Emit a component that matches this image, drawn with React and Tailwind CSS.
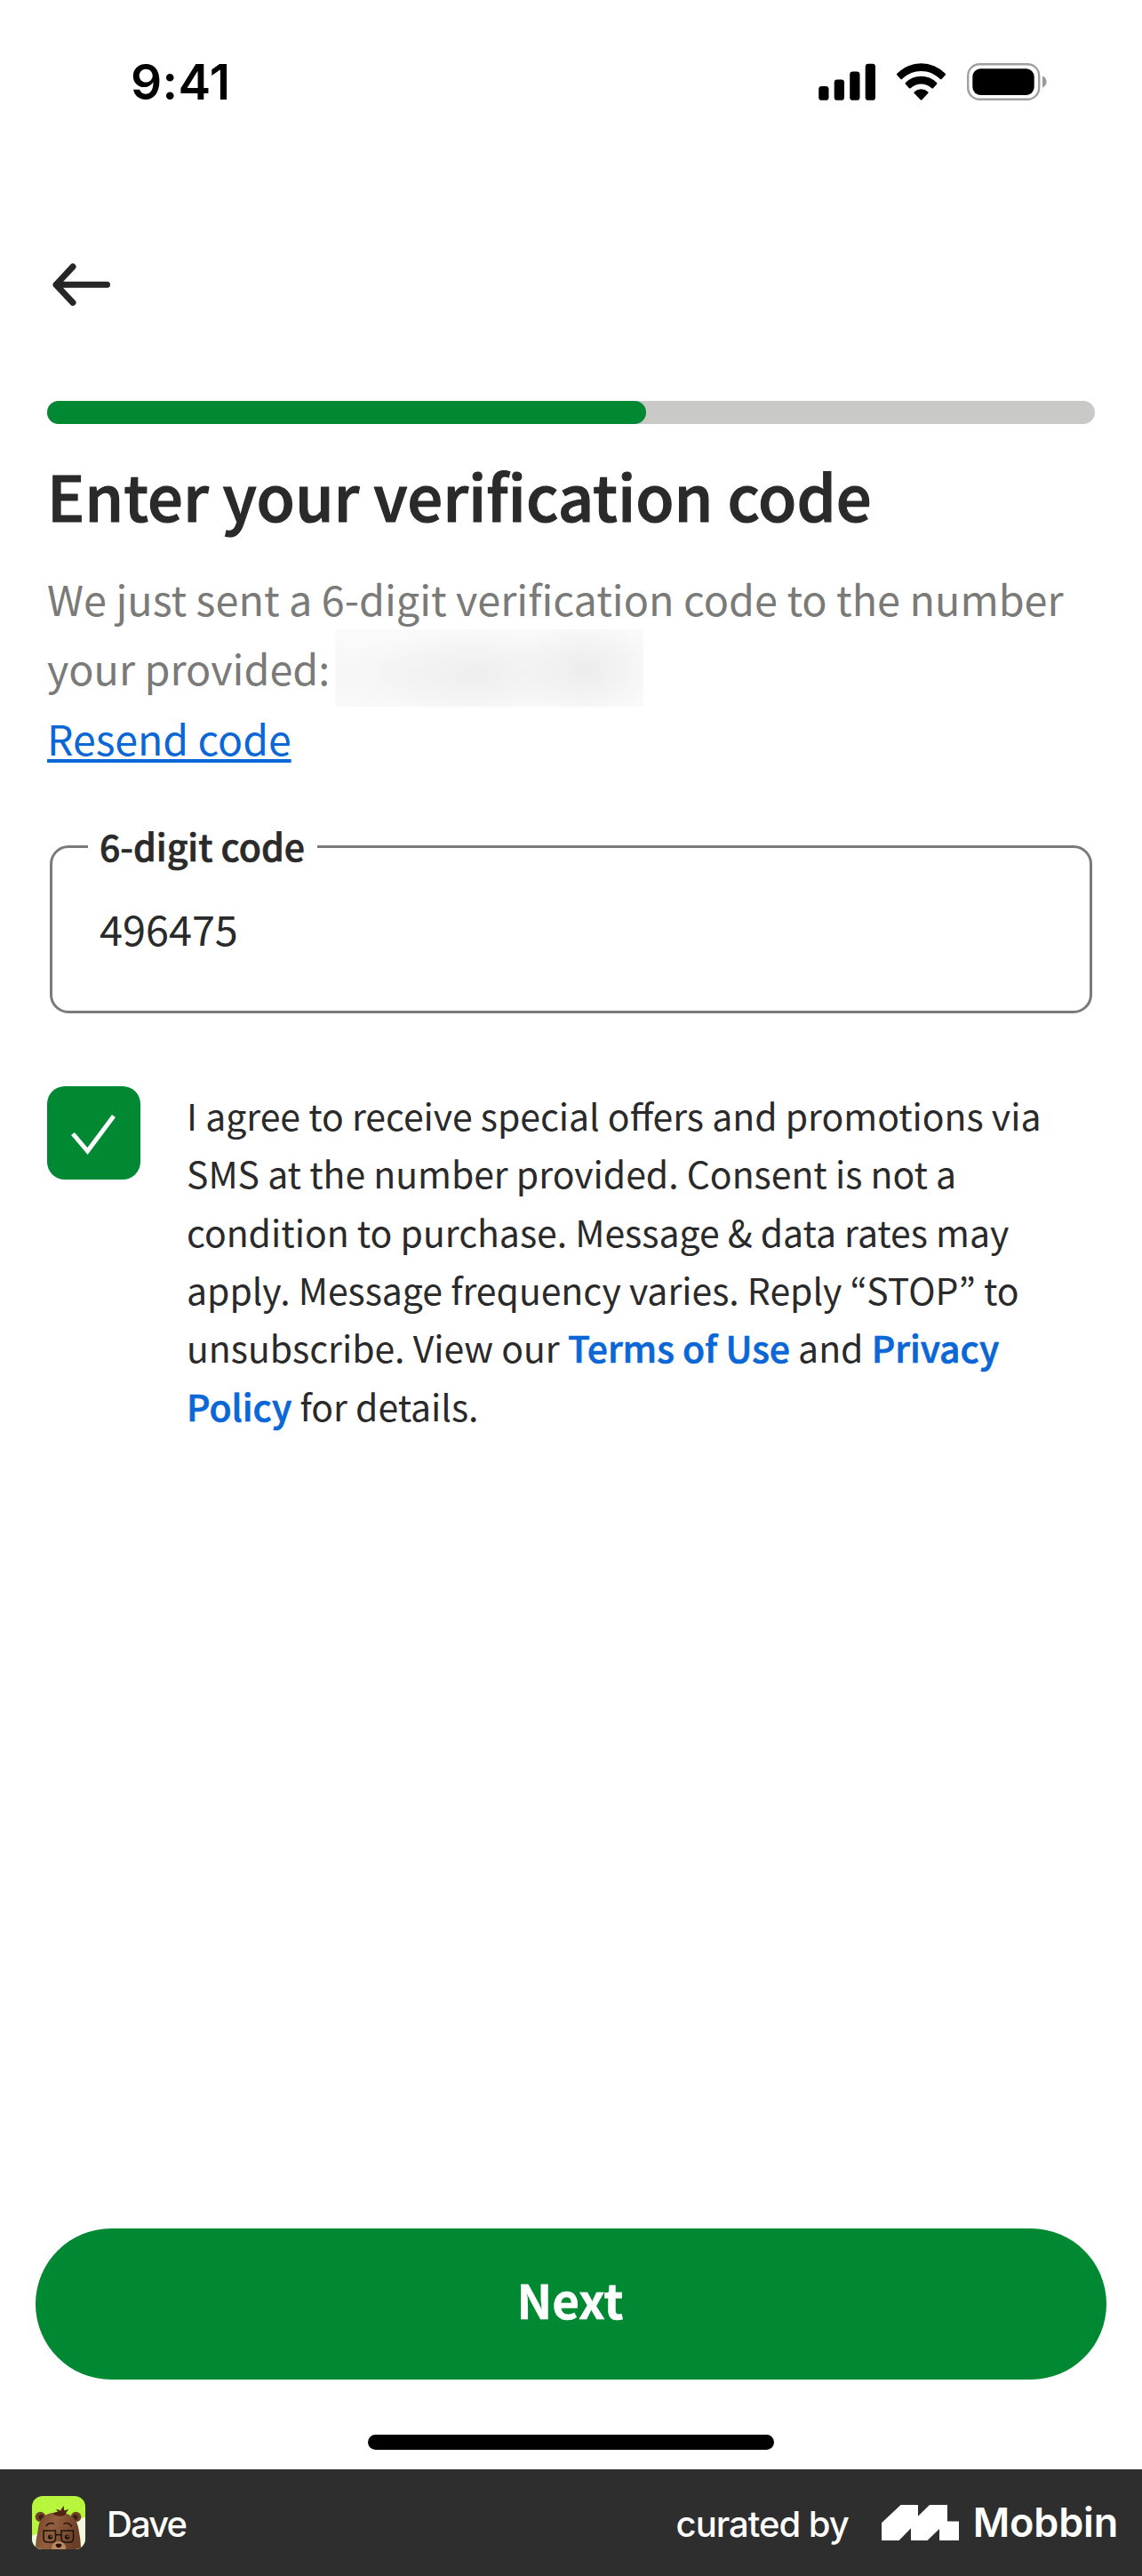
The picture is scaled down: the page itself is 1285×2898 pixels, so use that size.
function SignalIcon() {
  return (
    <svg width="64" height="42" viewBox="0 0 64 42" fill="#000">
      <rect x="0.2" y="26" width="11.3" height="15.8" rx="3.4" />
      <rect x="17.7" y="18.4" width="11.3" height="23.4" rx="3.4" />
      <rect x="35.2" y="9.6" width="11.3" height="32.2" rx="3.4" />
      <rect x="52.7" y="0.7" width="11.3" height="41.1" rx="3.4" />
    </svg>
  );
}

function WifiIcon() {
  return (
    <svg width="55" height="42" viewBox="0 -0.3 17 12.3" preserveAspectRatio="none" fill="#000">
      <path d="M8.5 2.3c2.47 0 4.84.95 6.63 2.65.13.13.35.13.49 0l1.28-1.3a.35.35 0 0 0 0-.5 12.14 12.14 0 0 0-16.8 0 .35.35 0 0 0 0 .5l1.29 1.3c.13.13.35.13.48 0A9.6 9.6 0 0 1 8.5 2.3z" />
      <path d="M8.5 6.55c1.36 0 2.67.5 3.67 1.42.14.13.35.13.49-.01l1.28-1.3a.36.36 0 0 0-.01-.51 7.9 7.9 0 0 0-10.87 0 .36.36 0 0 0 0 .51l1.28 1.3c.14.14.35.14.49.01A5.4 5.4 0 0 1 8.5 6.55z" />
      <path d="M11 9.4a.36.36 0 0 0-.13-.28 3.67 3.67 0 0 0-4.74 0 .36.36 0 0 0-.01.52l2.13 2.14a.35.35 0 0 0 .5 0l2.14-2.14A.36.36 0 0 0 11 9.4z" />
    </svg>
  );
}

function BatteryIcon() {
  return (
    <svg width="90" height="42" viewBox="0 0 90 42">
      <rect x="1.2" y="1.2" width="80" height="39.6" rx="13" fill="none" stroke="#a0a0a0" strokeWidth="2.4" />
      <rect x="6.3" y="6.3" width="69.4" height="29.6" rx="8.8" fill="#000" />
      <path d="M85 14.6c2.7 1.1 4.6 3.6 4.6 6.5s-1.9 5.4-4.6 6.5z" fill="#999" />
    </svg>
  );
}

function BackIcon() {
  return (
    <svg width="68" height="50" viewBox="0 0 68 50" fill="none" stroke="#262626" strokeWidth="7" strokeLinecap="round" strokeLinejoin="round">
      <path d="M62.5 25.3H5M24 5 5 25.3 24 45.5" />
    </svg>
  );
}

function CheckIcon() {
  return (
    <svg width="105" height="105" viewBox="0 0 105 105" fill="none" stroke="#fff" strokeWidth="5">
      <path d="M29 53.5 45.5 73 75 33.5" />
    </svg>
  );
}

function BearAvatar() {
  return (
    <svg width="60" height="60" viewBox="0 0 60 60" className="rounded-xl">
      <defs>
        <linearGradient id="fur" x1="0" x2="1" y1="0" y2="0.3">
          <stop offset="0" stopColor="#6e4129" />
          <stop offset="0.45" stopColor="#93603f" />
          <stop offset="1" stopColor="#6b3e27" />
        </linearGradient>
      </defs>
      <rect width="60" height="60" fill="#b8f53d" />
      <path d="M0 45 10 40V60H0zM46 27 60 24V60H46z" fill="#f1f8de" />
      <circle cx="9.5" cy="23.5" r="5.8" fill="#6e4128" />
      <circle cx="10.5" cy="24" r="3" fill="#3a2015" />
      <circle cx="49.5" cy="23.5" r="5.8" fill="#6e4128" />
      <circle cx="48.5" cy="24" r="3" fill="#3a2015" />
      <path d="M4 60C4 50 6 44 7 36 8.5 24 16 18.5 29 18.5S50 24 52 35c1.5 8 3 15 3 25z" fill="url(#fur)" />
      <path d="M23 20c2-1.500 4.500-2 6-2-.5-1.500-1.500-2.500-2.500-3 2.500 0 4.500.8 5.500 1.800.8-2 2.300-4.300 4-5.800-.4 2.500 0 4.200.6 5.400 1.400-.6 3-1.400 4.900-1.200-1.800 1.300-2.800 3-3.500 5.300-3 3-10 3-15-.5z" fill="#4f2614" />
      <path d="M16 33.5c2-2.800 5.500-3.500 8.500-2.300M36 31c3-1 6.500 0 8.500 3" fill="none" stroke="#2b170e" strokeWidth="1.4" strokeLinecap="round" />
      <ellipse cx="30" cy="58" rx="8" ry="7" fill="#b9875f" />
      <path d="M13 39h13.500v8.500q0 4.500-4.500 4.500h-4.500q-4.500 0-4.500-4.500zM33 39h13.500v8.500q0 4.500-4.500 4.500h-4.500q-4.500 0-4.500-4.500zM26.500 44.500q3.200-2 6.500 0" fill="none" stroke="#1d130e" strokeWidth="1.5" />
      <circle cx="20.5" cy="46" r="2.6" fill="#20110a" />
      <circle cx="39.5" cy="46" r="2.6" fill="#20110a" />
      <circle cx="21.2" cy="45.2" r="0.7" fill="#d8b59c" />
      <circle cx="40.2" cy="45.2" r="0.7" fill="#d8b59c" />
      <path d="M26.500 54.500q3.500-2 7 0 0 3-3.500 3.800-3.500-.8-3.500-3.800z" fill="#24130c" />
    </svg>
  );
}

function MobbinLogo() {
  return (
    <svg width="87" height="40" viewBox="0 0 87 40" fill="#fff">
      <path d="M0 20.3 21.500 0H41V12.800L54 0H74V18.400H87V40H65V27L51.500 40H33V26.300L19.500 40H0z" />
    </svg>
  );
}

function StatusBar() {
  return (
    <div className="flex h-[184px] items-center justify-between pl-[147px] pr-[107px]">
      <span className="mt-[1px] font-[Inter,sans-serif] text-[55px] font-semibold leading-none tracking-[0.4px] text-black">9:41</span>
      <div className="flex items-center">
        <SignalIcon />
        <div className="ml-6"><WifiIcon /></div>
        <div className="ml-6"><BatteryIcon /></div>
      </div>
    </div>
  );
}

export default function App() {
  return (
    <div className="flex h-[2898px] w-[1285px] flex-col bg-white font-['Noto_Sans_CJK_KR','Noto_Sans',sans-serif] text-[#2a2a2a]">
      <StatusBar />

      <main className="flex flex-1 flex-col">
        <div className="px-[53px]">
          <button className="mt-[111px] block pl-[5px]" aria-label="Back"><BackIcon /></button>

          <div className="mt-[106px] h-[26px] w-full rounded-full bg-[#c9c9c7]">
            <div className="h-full w-[674px] rounded-full bg-[#008832]" />
          </div>

          <h1 className="mt-[29px] text-[70.5px] font-medium leading-[100px] [-webkit-text-stroke:1.2px_#2a2a2a]">
            Enter your verification code
          </h1>

          <div className="mt-[28px] text-[46.75px] leading-[78.3px] text-[#7a7a78]">
            <p className="whitespace-nowrap">We just sent a 6-digit verification code to the number</p>
            <div className="flex">
              <span>your provided:</span>
              <span className="-mb-[5px] -ml-px -mt-[4px] ml-[6px] h-[87px] w-[347px] bg-[#fafafa] bg-[radial-gradient(ellipse_120px_52px_at_46%_57%,#eeeeee,transparent),radial-gradient(ellipse_85px_56px_at_81%_52%,#ececec,transparent),radial-gradient(ellipse_150px_46px_at_20%_60%,#f5f5f5,transparent)]" />
            </div>
            <a className="block w-fit text-[46.4px] text-[#0b66d6] underline decoration-[3.5px] underline-offset-[4px] [text-decoration-skip-ink:none]">Resend code</a>
          </div>

          <div className="relative mx-[3px] mt-[82px] h-[189px] rounded-[21px] border-[3px] border-[#7a7a7a] pl-[53px] pt-[55px]">
            <label className="absolute -top-[33px] left-[40px] w-[258px] whitespace-nowrap bg-white pl-[13px] text-[41px] font-medium leading-[60px] [-webkit-text-stroke:0.7px_#2a2a2a]">
              6-digit code
            </label>
            <div className="text-[46.8px] leading-[70px]">496475</div>
          </div>

          <div className="mt-[82px] flex items-start">
            <div className="h-[105px] w-[105px] shrink-0 rounded-[20px] bg-[#008832]"><CheckIcon /></div>
            <p className="ml-[52px] w-[1022px] text-[40.92px] leading-[65.35px]">
              I agree to receive special offers and promotions via SMS at the number provided. Consent is not a condition to
              purchase. Message &amp; data rates may apply. Message frequency varies. Reply “STOP” to unsubscribe. View our{" "}
              <a className="font-medium text-[#0b66d6] [-webkit-text-stroke:0.7px_#0b66d6]">Terms of Use</a> and{" "}
              <a className="font-medium text-[#0b66d6] [-webkit-text-stroke:0.7px_#0b66d6]">Privacy Policy</a> for details.
            </p>
          </div>
        </div>

        <button className="mx-[40px] mt-auto flex h-[170.5px] items-center justify-center rounded-full bg-[#008832] pb-[10px] pr-[2px] text-[53px] font-bold text-white [-webkit-text-stroke:0.5px_#fff]">
          Next
        </button>
        <div className="mx-auto mb-[22.5px] mt-[61.5px] h-[17px] w-[457px] rounded-full bg-black" />
      </main>

      <footer className="flex h-[120px] items-center bg-[#2e2e2e] px-9 font-[Inter,sans-serif] text-[40px] font-medium text-white">
        <BearAvatar />
        <span className="ml-[24px] mt-[3px] tracking-[-1.9px]">Dave</span>
        <span className="ml-auto mt-[3px] tracking-[-1px]">curated by</span>
        <div className="ml-[37px]"><MobbinLogo /></div>
        <span className="-mr-[9px] ml-[16px] text-[45px] font-semibold tracking-[-0.2px]">Mobbin</span>
      </footer>
    </div>
  );
}
